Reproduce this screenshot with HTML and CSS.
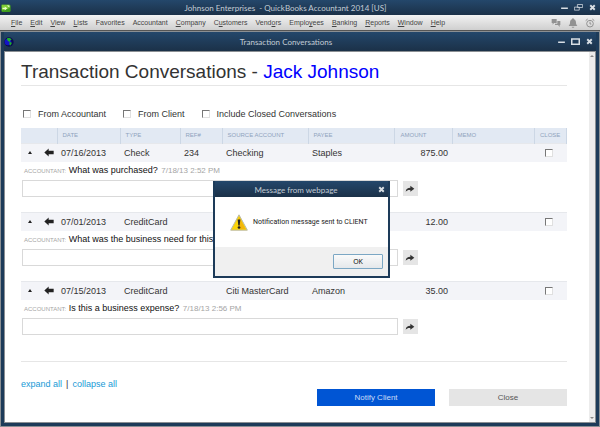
FILE: index.html
```html
<!DOCTYPE html>
<html lang="en">
<head>
  <meta charset="UTF-8">
  <meta name="viewport" content="width=device-width, initial-scale=1.0">
  <title>Transaction Conversations</title>
  <link rel="stylesheet" href="styles.css">
</head>
<body>
  <!-- Application bar -->
  <header class="titlebar app-bar">
    <svg class="logo" viewBox="0 0 27 24">
      <path d="M2 3h22l2 3v15l-3 2H3l-2-3V6z" fill="#3f9d1e"/>
      <path d="M2 3h21l-3 11-17 5z" fill="#7fcf35"/>
      <path d="M4 11h6V8l7 5-7 6v-4H4zM16 5h7v6z" fill="#eaffc9"/>
    </svg>
    <span class="caption">Johnson Enterprises &nbsp;- QuickBooks Accountant 2014 [US]</span>
    <div class="controls">
      <button aria-label="Minimize"><svg viewBox="0 0 24 24"><path d="M3 14h18" stroke-width="4"/></svg></button>
      <button aria-label="Restore"><svg viewBox="0 0 24 24"><path d="M9 4h14v8H9zM1 11h13v8H1z" stroke-width="2"/></svg></button>
      <button aria-label="Close"><svg viewBox="0 0 24 24"><path d="M6 6l12 12M18 6L6 18" stroke-width="5"/></svg></button>
    </div>
  </header>

  <nav class="menubar">
    <a href="#"><u>F</u>ile</a>
    <a href="#"><u>E</u>dit</a>
    <a href="#"><u>V</u>iew</a>
    <a href="#"><u>L</u>ists</a>
    <a href="#">Favorites</a>
    <a href="#">Accountant</a>
    <a href="#"><u>C</u>ompany</a>
    <a href="#">C<u>u</u>stomers</a>
    <a href="#">Vend<u>o</u>rs</a>
    <a href="#">Emplo<u>y</u>ees</a>
    <a href="#"><u>B</u>anking</a>
    <a href="#"><u>R</u>eports</a>
    <a href="#"><u>W</u>indow</a>
    <a href="#"><u>H</u>elp</a>
    <div class="tools">
      <svg viewBox="0 0 30 30"><path d="M2 3h15v12H9l-4 5v-5H2z" fill="#929292"/><path d="M19 9h9v12h-2v6l-5-6h-9v-4h7z" fill="#929292"/></svg>
      <svg viewBox="0 0 30 30"><path d="M15 1c2 0 3 1 3 3 5 2 6 6 6 11 0 4 2 6 4 9H2c2-3 4-5 4-9 0-5 1-9 6-11 0-2 1-3 3-3zM11 26h8c0 4-8 4-8 0z" fill="#929292"/></svg>
      <svg viewBox="0 0 30 30" fill="none" stroke="#929292" stroke-width="3"><circle cx="15" cy="17" r="10"/><path d="M15 11v7h4M2 8l6-5M28 8l-6-5"/></svg>
    </div>
  </nav>

  <!-- Conversations window -->
  <div class="window">
    <div class="titlebar">
      <svg class="logo" viewBox="0 0 30 30">
        <circle cx="15" cy="15" r="14" fill="#0b0b50"/>
        <circle cx="12" cy="15" r="10" fill="#1414c8"/>
        <path d="M10 3l8 0 5 5-4 2-2 5-5-3-3-4zM17 15l5 1 1 4-5 6-2-6z" fill="#1fae2c"/>
      </svg>
      <h2 class="caption">Transaction Conversations</h2>
      <div class="controls">
        <button aria-label="Minimize"><svg viewBox="0 0 24 24"><path d="M3 14h18" stroke-width="4"/></svg></button>
        <button aria-label="Maximize"><svg viewBox="0 0 24 24"><path d="M2 5h20v14H2z" stroke-width="4"/></svg></button>
        <button aria-label="Close"><svg viewBox="0 0 24 24"><path d="M6 6l12 12M18 6L6 18" stroke-width="5"/></svg></button>
      </div>
    </div>

    <div class="pane">
      <main>
        <h1>Transaction Conversations - <span>Jack Johnson</span></h1>

        <div class="filters">
          <label><input type="checkbox"> From Accountant</label>
          <label><input type="checkbox"> From Client</label>
          <label><input type="checkbox"> Include Closed Conversations</label>
        </div>

        <table>
          <colgroup>
            <col class="c-icons"><col class="c-date"><col class="c-type"><col class="c-ref">
            <col class="c-name"><col class="c-name"><col class="c-amount"><col><col class="c-close">
          </colgroup>
          <thead>
            <tr>
              <th></th><th>DATE</th><th>TYPE</th><th>REF#</th><th>SOURCE ACCOUNT</th>
              <th>PAYEE</th><th class="amount">AMOUNT</th><th>MEMO</th><th>CLOSE</th>
            </tr>
          </thead>
          <tbody>
            <tr class="entry">
              <td><div class="marks"><i class="toggle"></i><svg class="back" viewBox="0 0 30 26"><path d="M1 13L14 1v7h15v10H14v7z"/></svg></div></td>
              <td>07/16/2013</td><td>Check</td><td>234</td><td>Checking</td><td>Staples</td>
              <td class="amount">875.00</td><td></td>
              <td class="close"><input type="checkbox" aria-label="Close conversation"></td>
            </tr>
            <tr class="thread">
              <td colspan="9">
                <p><small>ACCOUNTANT:</small> What was purchased? <time>7/18/13 2:52 PM</time></p>
                <div class="reply">
                  <input type="text" aria-label="Reply">
                  <button aria-label="Send"><svg viewBox="0 0 30 24"><path d="M2 20c1-9 6-12 14-12V2l12 9-12 9v-5c-6-1-10 1-14 5z"/></svg></button>
                </div>
              </td>
            </tr>
            <tr class="entry">
              <td><div class="marks"><i class="toggle"></i><svg class="back" viewBox="0 0 30 26"><path d="M1 13L14 1v7h15v10H14v7z"/></svg></div></td>
              <td>07/01/2013</td><td>CreditCard</td><td></td><td></td><td></td>
              <td class="amount">12.00</td><td></td>
              <td class="close"><input type="checkbox" aria-label="Close conversation"></td>
            </tr>
            <tr class="thread">
              <td colspan="9">
                <p><small>ACCOUNTANT:</small> What was the business need for this p</p>
                <div class="reply">
                  <input type="text" aria-label="Reply">
                  <button aria-label="Send"><svg viewBox="0 0 30 24"><path d="M2 20c1-9 6-12 14-12V2l12 9-12 9v-5c-6-1-10 1-14 5z"/></svg></button>
                </div>
              </td>
            </tr>
            <tr class="entry">
              <td><div class="marks"><i class="toggle"></i><svg class="back" viewBox="0 0 30 26"><path d="M1 13L14 1v7h15v10H14v7z"/></svg></div></td>
              <td>07/15/2013</td><td>CreditCard</td><td></td><td>Citi MasterCard</td><td>Amazon</td>
              <td class="amount">35.00</td><td></td>
              <td class="close"><input type="checkbox" aria-label="Close conversation"></td>
            </tr>
            <tr class="thread">
              <td colspan="9">
                <p><small>ACCOUNTANT:</small> Is this a business expense? <time>7/18/13 2:56 PM</time></p>
                <div class="reply">
                  <input type="text" aria-label="Reply">
                  <button aria-label="Send"><svg viewBox="0 0 30 24"><path d="M2 20c1-9 6-12 14-12V2l12 9-12 9v-5c-6-1-10 1-14 5z"/></svg></button>
                </div>
              </td>
            </tr>
          </tbody>
        </table>

        <footer>
          <div class="links"><a href="#">expand all</a><span>|</span><a href="#">collapse all</a></div>
          <div class="actions">
            <button class="notify">Notify Client</button>
            <button>Close</button>
          </div>
        </footer>
      </main>
      <div class="scrollbar"><i class="up"></i><i class="down"></i></div>
    </div>
  </div>

  <!-- Alert over the page -->
  <dialog class="alert" open>
    <div class="titlebar">
      <span class="caption">Message from webpage</span>
      <div class="controls">
        <button aria-label="Close"><svg viewBox="0 0 24 24"><path d="M6 6l12 12M18 6L6 18" stroke-width="5"/></svg></button>
      </div>
    </div>
    <div class="message">
      <svg viewBox="0 0 54 50">
        <path d="M27 2L52 48H2z" fill="#fbd409" stroke="#b9b9a8" stroke-width="3" stroke-linejoin="round"/>
        <path d="M27 8l20 37H27z" fill="#f3b70a"/>
        <path d="M23 16h8l-2 18h-4z" fill="#222"/>
        <circle cx="27" cy="40" r="4" fill="#222"/>
      </svg>
      <p>Notification message sent to CLIENT</p>
    </div>
    <div class="alert-footer"><button>OK</button></div>
  </dialog>
</body>
</html>
```

FILE: styles.css
```css
* {
  box-sizing: border-box;
}

body {
  margin: 0;
  min-height: 100vh;
  display: flex;
  flex-direction: column;
  background: #8b8f93;
  font-family: "Liberation Sans", Arial, sans-serif;
  font-size: 9px;
  color: #333;
}

button {
  font-family: inherit;
  border: none;
  padding: 0;
  cursor: pointer;
}

p, h1, h2 {
  margin: 0;
  font-weight: normal;
}

/* Title bars */
.titlebar {
  display: grid;
  grid-template-columns: 1fr auto 1fr;
  align-items: center;
  height: 19px;
  padding-right: 2px;
  background: linear-gradient(#24476b, #1b3148);
  color: #c3ccd5;
}

.app-bar {
  height: 15px;
  padding-right: 3px;
}

.titlebar .caption {
  grid-column: 2;
  margin-right: 26px;
  font-family: Lato, sans-serif;
  font-size: 8px;
  line-height: 12px;
}

.logo {
  width: 10px;
  height: 10px;
}

.app-bar .logo {
  margin: 0 1px;
}

.controls {
  grid-column: 3;
  display: flex;
  justify-content: flex-end;
  gap: 5px;
}

.controls button {
  display: flex;
  background: none;
}

.controls svg {
  width: 9px;
  height: 9px;
  fill: none;
  stroke: #d8dee4;
}

/* Menu */
.menubar {
  display: flex;
  align-items: center;
  gap: 8px;
  height: 16px;
  padding: 0 5px 0 11px;
  background: linear-gradient(#f2f2f2, #cfcfcf);
  border-bottom: 1px solid #555;
}

.menubar a {
  font-size: 7px;
  color: #444;
  text-decoration: none;
}

.tools {
  display: flex;
  gap: 7px;
  margin-left: auto;
}

.tools svg {
  width: 10px;
  height: 10px;
}

/* Window frame */
.window {
  flex: 1;
  display: flex;
  flex-direction: column;
  margin: 1px 1px 2px;
  border: 3px solid #1d3b59;
  border-top: none;
}

.pane {
  flex: 1;
  display: flex;
  background: #fff;
  border: 1px solid #8b8f93;
}

main {
  flex: 1;
  padding: 9px 22px 16px 16px;
}

.scrollbar {
  display: flex;
  flex-direction: column;
  justify-content: space-between;
  align-items: center;
  width: 6px;
  padding: 3px 0;
  background: #ececec;
}

.up, .down, .toggle {
  border: 2px solid transparent;
}

.up {
  border-top: none;
  border-bottom-color: #888;
}

.down {
  border-bottom: none;
  border-top-color: #888;
}

h1 {
  font-size: 19px;
  line-height: 22px;
  padding-bottom: 2px;
  border-bottom: 1px solid #e6e6e6;
}

h1 span {
  color: #0000ff;
}

/* Filters */
.filters {
  display: flex;
  gap: 17px;
  padding: 22px 2px 8px;
}

.filters label {
  display: flex;
  align-items: center;
  gap: 7px;
  line-height: 12px;
}

input[type="checkbox"] {
  appearance: none;
  display: block;
  width: 8px;
  height: 8px;
  margin: 0;
  background: #fff;
  border: 1px solid #e0e0e0;
  border-top-color: #777;
  border-left-color: #777;
}

/* Transactions */
table {
  width: 100%;
  table-layout: fixed;
  border-collapse: collapse;
}

.c-icons { width: 36px; }
.c-date { width: 63px; }
.c-type { width: 60px; }
.c-ref { width: 42px; }
.c-name { width: 86px; }
.c-amount { width: 58px; }
.c-close { width: 32px; }

th {
  height: 15px;
  padding: 0 0 0 5px;
  background: #e2e9f3;
  border-right: 1px solid #ccd7e5;
  font-size: 6px;
  font-weight: normal;
  text-align: left;
  color: #8fa3bd;
}

td {
  padding: 0;
}

.entry td {
  height: 19px;
  padding-left: 4px;
  background: #f3f4f8;
  border-top: 1px solid #e6e8ec;
}

.amount {
  text-align: right;
}

th.amount {
  padding-right: 25px;
}

td.amount {
  padding-right: 4px;
}

.entry .close {
  padding-left: 10px;
}

.marks {
  display: flex;
  align-items: center;
  gap: 12px;
  padding-left: 3px;
}

.toggle {
  border-top: none;
  border-bottom: 3px solid #222;
}

.back {
  width: 10px;
  height: 9px;
  fill: #222;
}

.thread td {
  height: 50px;
  padding: 2px 0 0 1px;
  vertical-align: top;
}

.thread p {
  padding-left: 2px;
  line-height: 12px;
  color: #111;
}

.thread small {
  font-size: 6px;
  color: #a5a5a5;
}

.thread time {
  margin-left: 1px;
  font-size: 8px;
  color: #a5a5a5;
}

.reply {
  display: flex;
  align-items: center;
  gap: 5px;
  padding-top: 3px;
}

.reply input {
  width: 69%;
  height: 17px;
  border: 1px solid #d9d9d9;
}

.reply button {
  display: flex;
  justify-content: center;
  align-items: center;
  width: 15px;
  height: 15px;
  background: #e5e5e5;
}

.reply svg {
  width: 10px;
  height: 8px;
  fill: #333;
}

/* Footer */
footer {
  display: flex;
  justify-content: space-between;
  margin-top: 11px;
  padding-top: 16px;
  border-top: 1px solid #e6e6e6;
}

.links {
  display: flex;
  gap: 4px;
  line-height: 12px;
}

.links a {
  color: #189ad6;
  text-decoration: none;
}

.actions {
  display: flex;
  gap: 14px;
  padding-top: 11px;
}

.actions button {
  width: 118px;
  height: 17px;
  background: #e5e5e5;
  font-size: 8px;
  color: #555;
}

.actions .notify {
  background: #0055d4;
  color: #c9dcf8;
}

/* Alert */
.alert {
  position: fixed;
  top: 181px;
  left: 3px;
  right: 0;
  width: 177px;
  margin: 0 auto;
  padding: 0;
  border: 2px solid #1d3b59;
  border-top: none;
  background: #fff;
}

.alert .titlebar {
  height: 16px;
  padding-top: 1px;
}

.alert .caption {
  margin-right: 9px;
}

.message {
  display: flex;
  align-items: center;
  gap: 5px;
  height: 50px;
  padding-left: 15px;
  font-family: Roboto, sans-serif;
  font-size: 7px;
  color: #222;
}

.message svg {
  width: 18px;
  height: 17px;
}

.alert-footer {
  display: flex;
  justify-content: flex-end;
  padding: 7px 5px;
  background: #f0f0f0;
}

.alert-footer button {
  width: 50px;
  height: 15px;
  border: 1px solid #7ba7c4;
  border-radius: 1px;
  background: linear-gradient(#fafafa, #e4e8eb);
  font-family: "Open Sans", sans-serif;
  font-size: 7px;
  line-height: 12px;
}
```
